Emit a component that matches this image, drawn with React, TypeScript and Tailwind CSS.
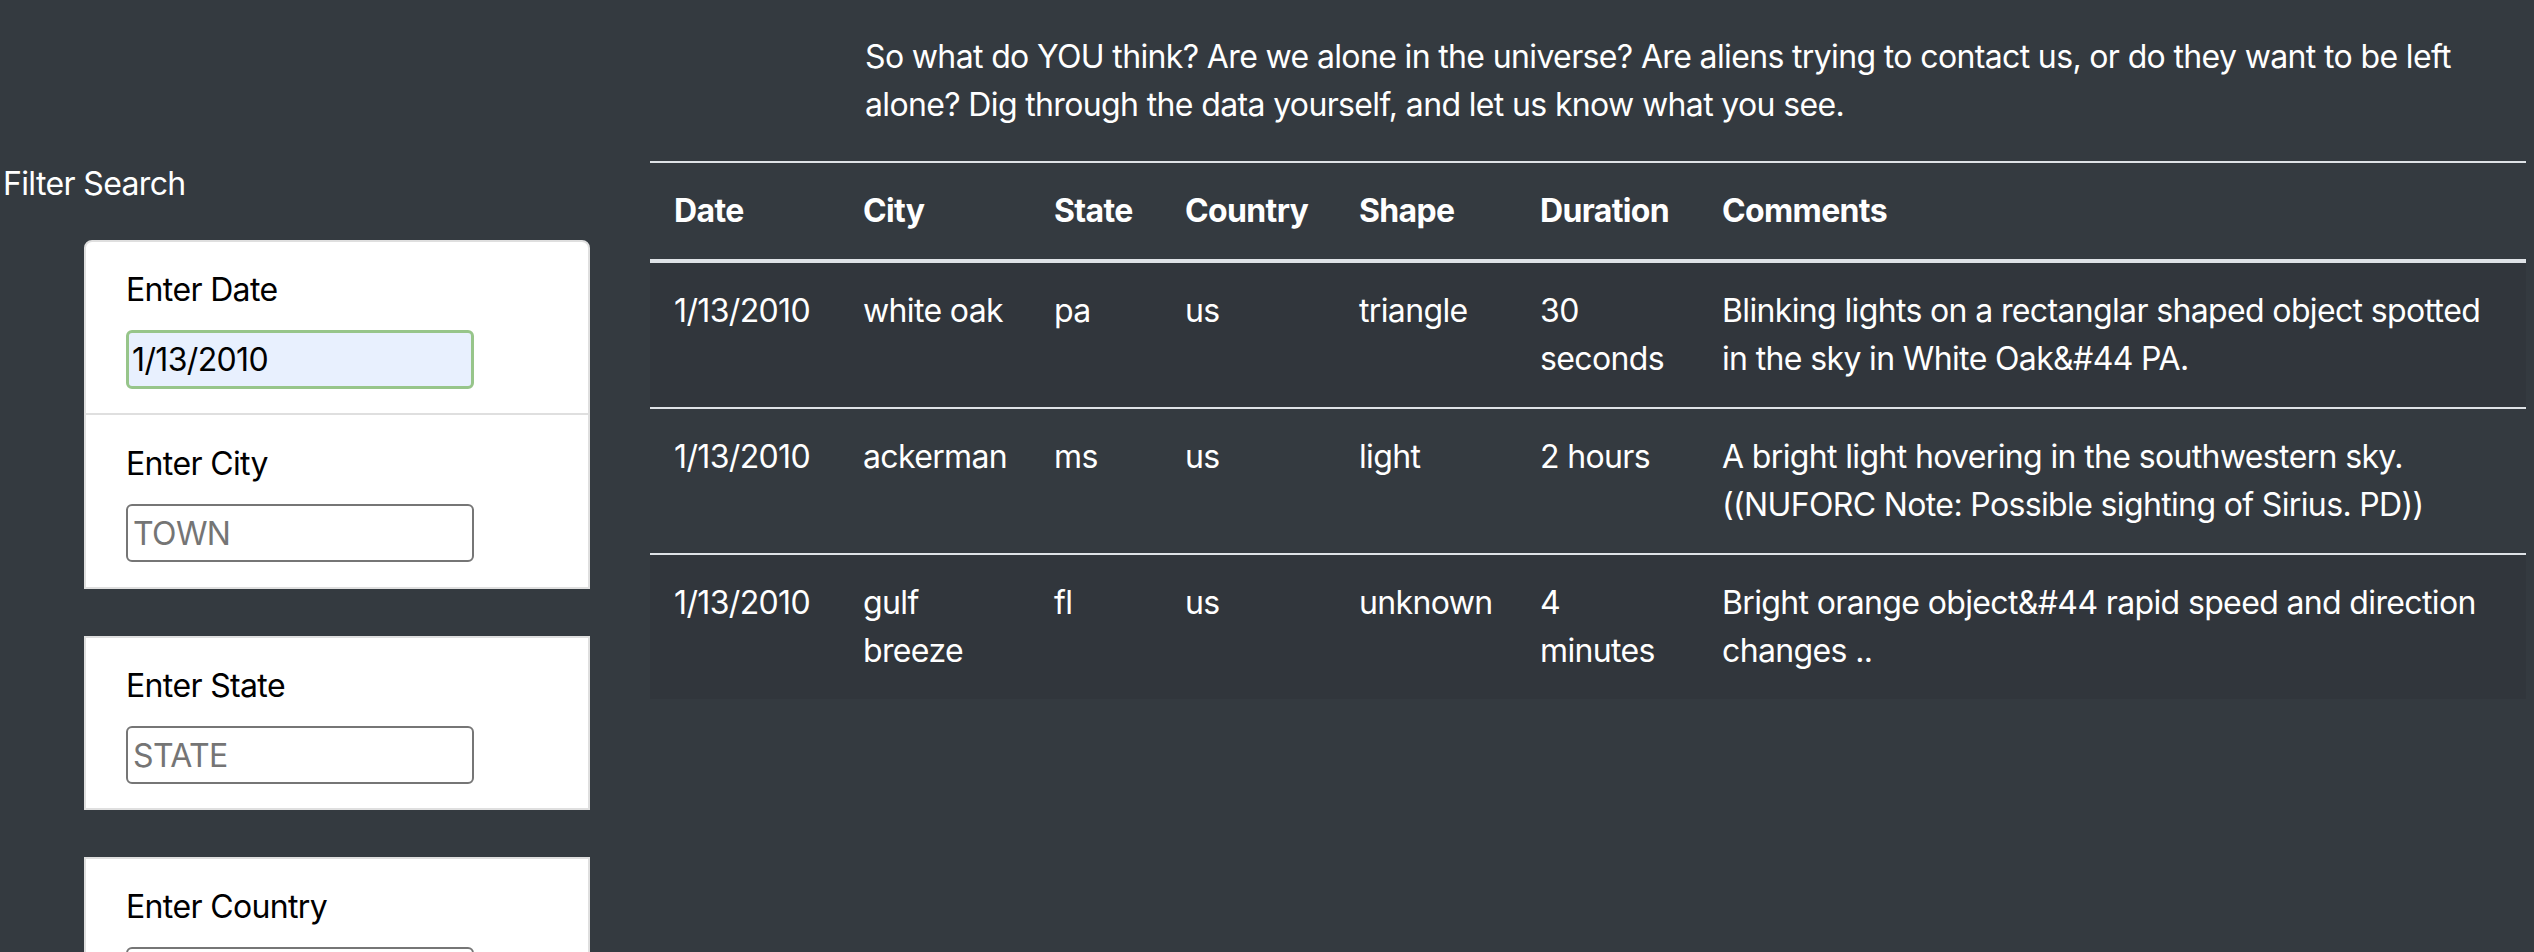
import React from "react";

const rows = [
  {
    date: "1/13/2010",
    city: "white oak",
    state: "pa",
    country: "us",
    shape: "triangle",
    duration: "30 seconds",
    comments: "Blinking lights on a rectanglar shaped object spotted in the sky in White Oak&#44 PA.",
  },
  {
    date: "1/13/2010",
    city: "ackerman",
    state: "ms",
    country: "us",
    shape: "light",
    duration: "2 hours",
    comments: "A bright light hovering in the southwestern sky. ((NUFORC Note: Possible sighting of Sirius. PD))",
  },
  {
    date: "1/13/2010",
    city: "gulf breeze",
    state: "fl",
    country: "us",
    shape: "unknown",
    duration: "4 minutes",
    comments: "Bright orange object&#44 rapid speed and direction changes ..",
  },
];

function Field({
  label,
  placeholder,
  value,
  focused,
  pad = "py-[24px]",
}: {
  label: string;
  placeholder?: string;
  value?: string;
  focused?: boolean;
  pad?: string;
}) {
  return (
    <div className={`px-[40px] ${pad}`}>
      <div className="h-[48px] mb-[16px] text-black">{label}</div>
      {focused ? (
        <input
          readOnly
          value={value}
          className="block w-[348px] h-[59px] rounded-[6px] border-[3px] border-[#97c58a] bg-[#e8f0fe] px-[3px] text-black tracking-[-0.02em] outline-none"
        />
      ) : (
        <input
          readOnly
          placeholder={placeholder}
          className="block w-[348px] h-[58px] rounded-[6px] border-2 border-[#767676] bg-white px-[5px] text-black tracking-[-0.02em] placeholder:text-[#757575] outline-none"
        />
      )}
    </div>
  );
}

export default function App() {
  return (
    <div className="min-h-screen w-full bg-[#343a40] font-['Inter',sans-serif] text-[32px] leading-[48px] tracking-[-0.02em] text-white">
      <div className="flex">
        <aside className="w-[650px] shrink-0 pt-[160px]">
          <div className="pl-[3px] h-[48px]">Filter Search</div>
          <div className="ml-[84px] mt-[32px] w-[506px]">
            <div className="rounded-t-[8px] border-2 border-[#dfdfdf] bg-white">
              <Field label="Enter Date" value="1/13/2010" focused pad="pt-[24px] pb-[24px]" />
              <div className="border-t-2 border-[#dfdfdf]" />
              <Field label="Enter City" placeholder="TOWN" pad="pt-[25px] pb-[25px]" />
            </div>
            <div className="mt-[47px] border-2 border-[#dfdfdf] bg-white">
              <Field label="Enter State" placeholder="STATE" />
            </div>
            <div className="mt-[47px] border-2 border-[#dfdfdf] bg-white">
              <Field label="Enter Country" placeholder="COUNTRY" />
            </div>
          </div>
        </aside>
        <main className="w-[1876px] shrink-0">
          <p className="ml-[215px] pt-[33px] mb-[32px] w-[1661px]">
            So what do YOU think? Are we alone in the universe? Are aliens trying to contact us, or do they want to be left alone? Dig through the data yourself, and let us know what you see.
          </p>
          <table className="w-[1876px] table-fixed text-left">
            <colgroup>
              <col className="w-[189px]" />
              <col className="w-[191px]" />
              <col className="w-[131px]" />
              <col className="w-[174px]" />
              <col className="w-[181px]" />
              <col className="w-[182px]" />
              <col />
            </colgroup>
            <thead>
              <tr>
                {["Date", "City", "State", "Country", "Shape", "Duration", "Comments"].map((h) => (
                  <th key={h} className="border-t-2 border-b-4 border-[#dee2e6] px-[24px] py-[24px] font-bold align-bottom">
                    {h}
                  </th>
                ))}
              </tr>
            </thead>
            <tbody>
              {rows.map((r, i) => (
                <tr key={i} className={i % 2 === 0 ? "bg-[#31363c]" : ""}>
                  {[r.date, r.city, r.state, r.country, r.shape, r.duration, r.comments].map((c, j) => (
                    <td key={j} className={`px-[24px] py-[24px] align-top ${i > 0 ? "border-t-2 border-[#dee2e6]" : ""}`}>
                      {c}
                    </td>
                  ))}
                </tr>
              ))}
            </tbody>
          </table>
        </main>
      </div>
    </div>
  );
}
